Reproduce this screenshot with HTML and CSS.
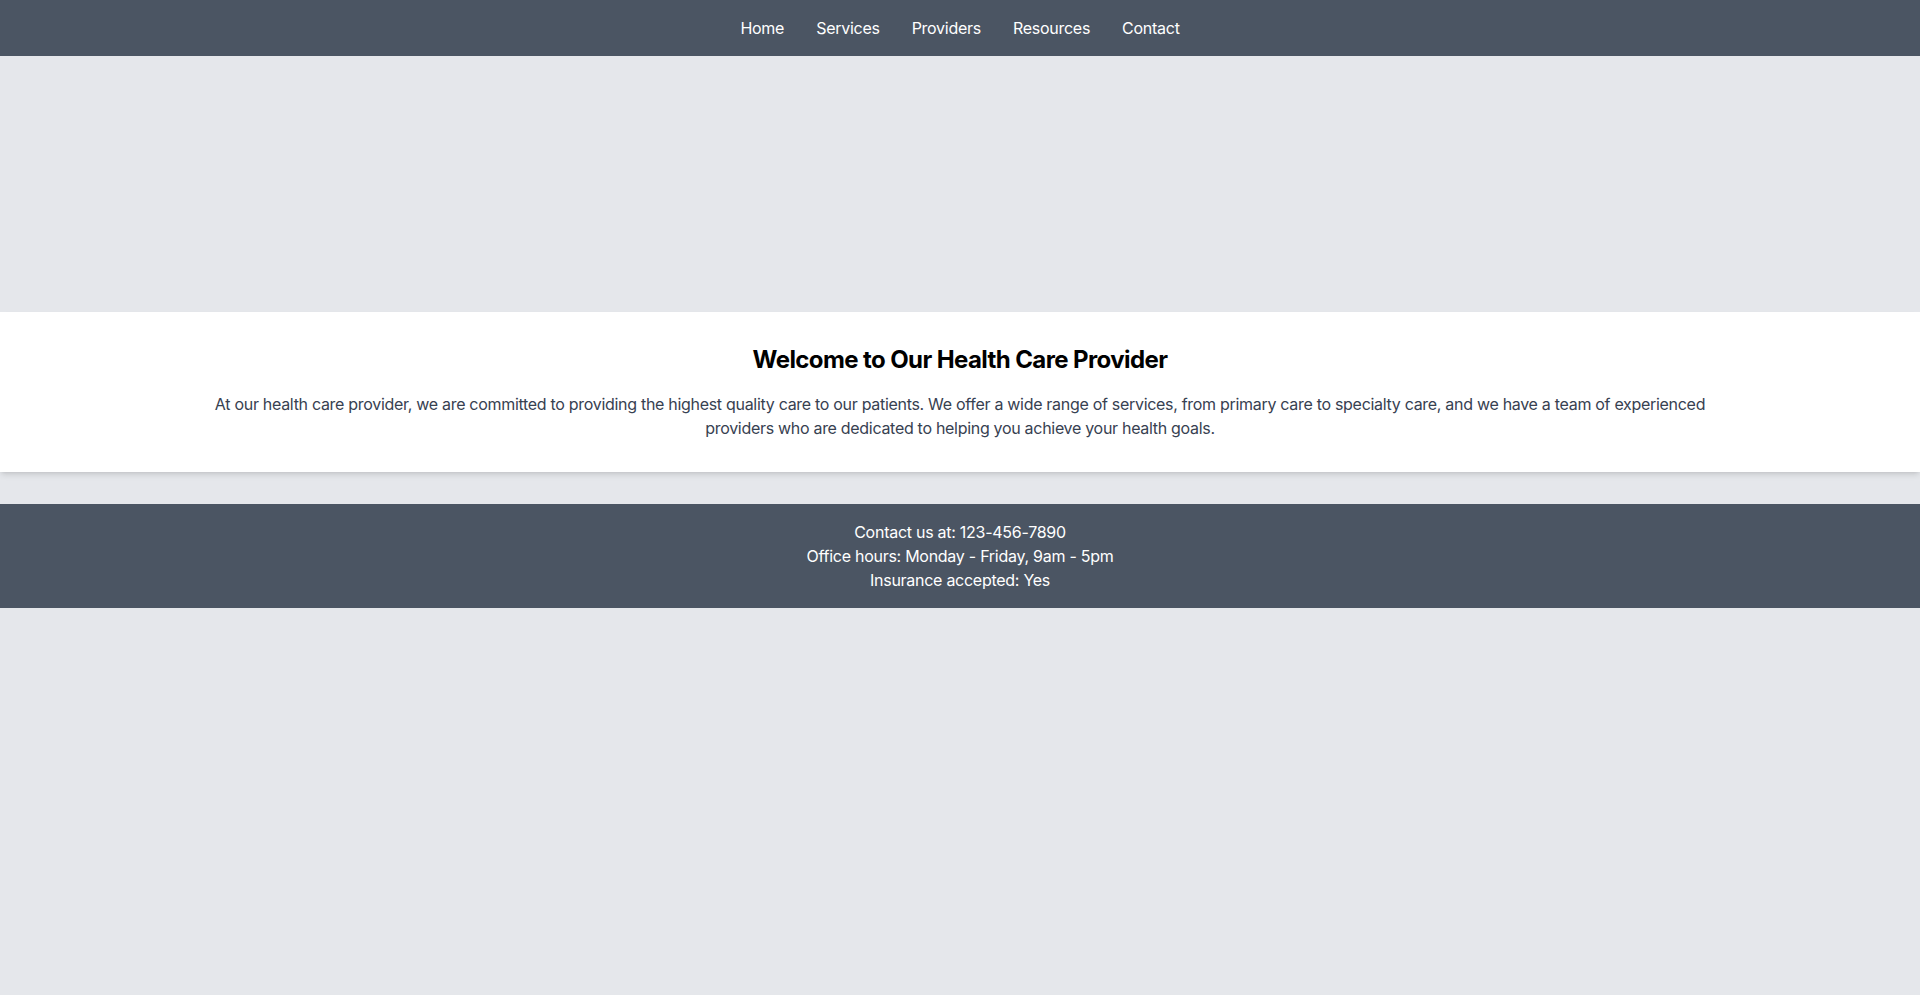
FILE: index.html
```html
<!DOCTYPE html>
<html lang="en">
<head>
<meta charset="utf-8">
<title>Health Care Provider</title>
<link rel="stylesheet" href="styles.css">
</head>
<body>
<nav class="nav">
  <a href="#" class="nav-link">Home</a>
  <a href="#" class="nav-link">Services</a>
  <a href="#" class="nav-link">Providers</a>
  <a href="#" class="nav-link">Resources</a>
  <a href="#" class="nav-link">Contact</a>
</nav>
<div class="hero"></div>
<section class="welcome">
  <div class="container">
    <h2 class="welcome-title">Welcome to Our Health Care Provider</h2>
    <p class="welcome-text">At our health care provider, we are committed to providing the highest quality care to our patients. We offer a wide range of services, from primary care to specialty care, and we have a team of experienced providers who are dedicated to helping you achieve your health goals.</p>
  </div>
</section>
<footer class="footer">
  <p>Contact us at: 123-456-7890</p>
  <p>Office hours: Monday - Friday, 9am - 5pm</p>
  <p>Insurance accepted: Yes</p>
</footer>
</body>
</html>
```

FILE: styles.css
```css
* { box-sizing: border-box; }
html, body { margin: 0; padding: 0; }
body {
  background: #e5e7eb;
  font-family: Inter, "Noto Sans", "Liberation Sans", sans-serif;
  font-size: 16px;
  line-height: 24px;
  letter-spacing: -0.27px;
  min-height: 995px;
}
.nav {
  background: #4b5563;
  display: flex;
  justify-content: center;
  gap: 32px;
  padding: 16px 0;
}
.nav-link {
  color: #ffffff;
  text-decoration: none;
  font-size: 16px;
  line-height: 24px;
}
.hero {
  height: 256px;
}
.welcome {
  background: #ffffff;
  padding: 32px 0;
  box-shadow: 0 4px 6px -1px rgba(0,0,0,0.1), 0 2px 4px -2px rgba(0,0,0,0.1);
}
.container {
  max-width: 1536px;
  margin: 0 auto;
  padding: 0 16px;
  text-align: center;
}
.welcome-title {
  margin: 0 0 16px;
  font-size: 24px;
  line-height: 32px;
  font-weight: 700;
  letter-spacing: -0.6px;
  color: #000;
}
.welcome-text {
  margin: 0;
  color: #374151;
  letter-spacing: -0.3px;
}
.footer {
  margin-top: 32px;
  background: #4b5563;
  color: #ffffff;
  text-align: center;
  padding: 16px 0;
}
.footer p { margin: 0; }
```
